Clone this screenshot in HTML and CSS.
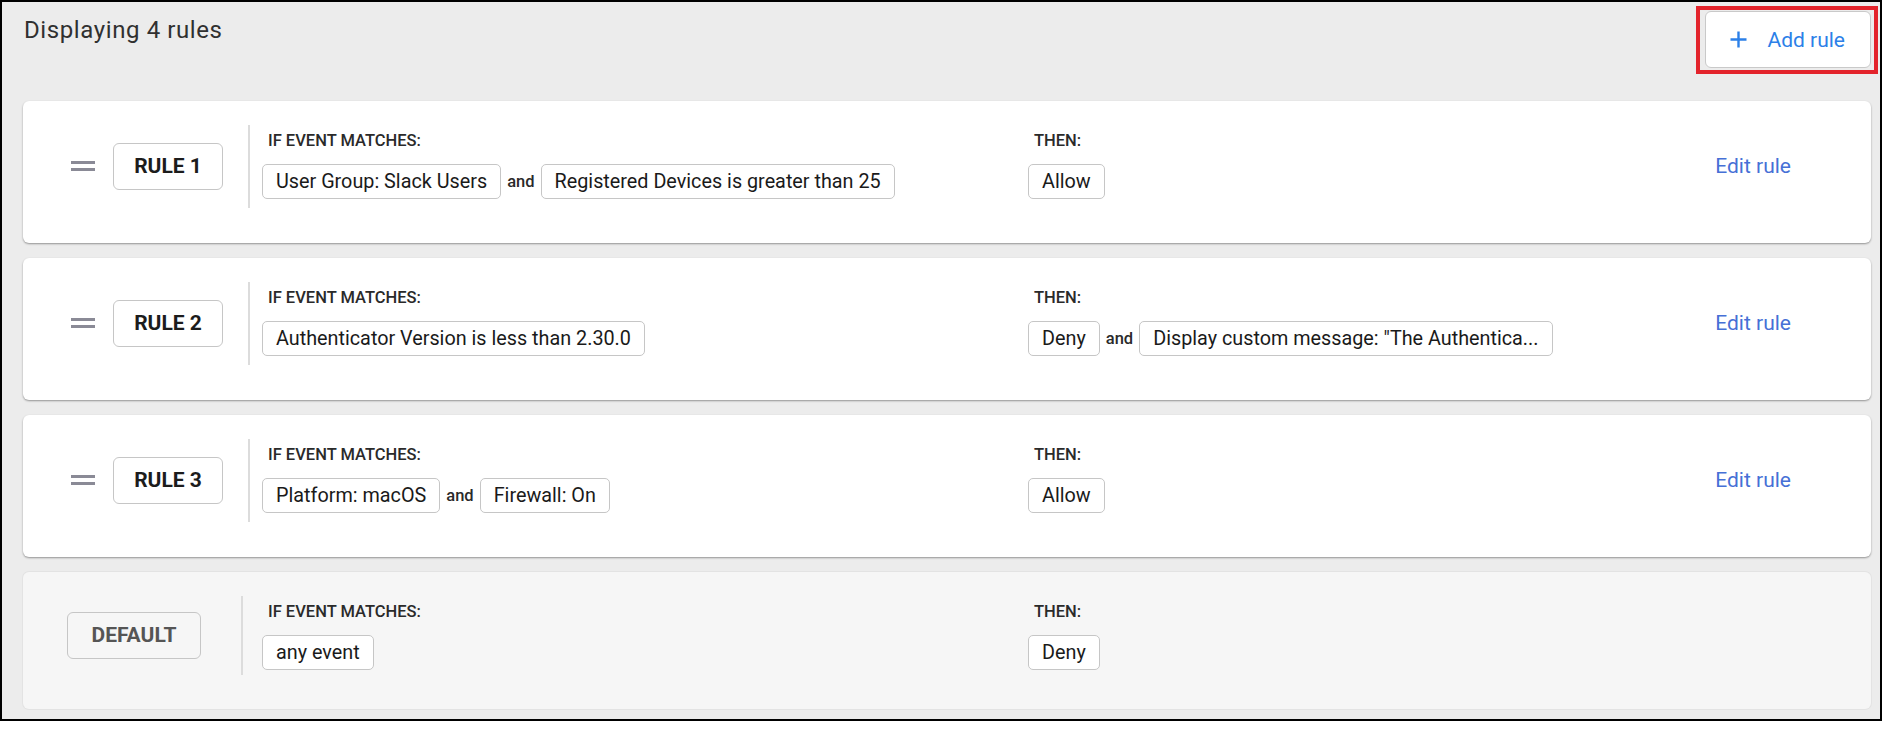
FILE: index.html
```html
<!DOCTYPE html>
<html lang="en">
<head>
<meta charset="utf-8">
<title>Rules</title>
<link rel="stylesheet" href="styles.css">
</head>
<body>
<div class="panel">
  <div class="header">
    <h2 class="title">Displaying 4 rules</h2>
    <span class="highlight">
      <button class="add-btn" type="button">
        <svg class="plus" width="19" height="19" viewBox="0 0 19 19" aria-hidden="true"><path d="M9.5 1.5v16M1.5 9.5h16" stroke="currentColor" stroke-width="2.4" fill="none"/></svg>
        <span>Add rule</span>
      </button>
    </span>
  </div>
  <div class="rules">
    <div class="card">
      <div class="lead">
        <span class="handle"></span>
        <span class="tag">RULE 1</span>
      </div>
      <div class="body">
        <div class="cond cond-if">
          <div class="label">IF EVENT MATCHES:</div>
          <div class="chips"><span class="chip">User Group: Slack Users</span><span class="and">and</span><span class="chip">Registered Devices is greater than 25</span></div>
        </div>
        <div class="cond cond-then">
          <div class="label">THEN:</div>
          <div class="chips"><span class="chip">Allow</span></div>
        </div>
      </div>
      <a class="edit" href="#">Edit rule</a>
    </div>
    <div class="card">
      <div class="lead">
        <span class="handle"></span>
        <span class="tag">RULE 2</span>
      </div>
      <div class="body">
        <div class="cond cond-if">
          <div class="label">IF EVENT MATCHES:</div>
          <div class="chips"><span class="chip">Authenticator Version is less than 2.30.0</span></div>
        </div>
        <div class="cond cond-then">
          <div class="label">THEN:</div>
          <div class="chips"><span class="chip">Deny</span><span class="and">and</span><span class="chip">Display custom message: "The Authentica...</span></div>
        </div>
      </div>
      <a class="edit" href="#">Edit rule</a>
    </div>
    <div class="card">
      <div class="lead">
        <span class="handle"></span>
        <span class="tag">RULE 3</span>
      </div>
      <div class="body">
        <div class="cond cond-if">
          <div class="label">IF EVENT MATCHES:</div>
          <div class="chips"><span class="chip">Platform: macOS</span><span class="and">and</span><span class="chip">Firewall: On</span></div>
        </div>
        <div class="cond cond-then">
          <div class="label">THEN:</div>
          <div class="chips"><span class="chip">Allow</span></div>
        </div>
      </div>
      <a class="edit" href="#">Edit rule</a>
    </div>
    <div class="card card-default">
      <div class="lead lead-default">
        <span class="tag tag-default">DEFAULT</span>
      </div>
      <div class="body body-default">
        <div class="cond cond-if">
          <div class="label">IF EVENT MATCHES:</div>
          <div class="chips"><span class="chip">any event</span></div>
        </div>
        <div class="cond cond-then">
          <div class="label">THEN:</div>
          <div class="chips"><span class="chip">Deny</span></div>
        </div>
      </div>
    </div>
  </div>
</div>
</body>
</html>
```

FILE: styles.css
```css
* { box-sizing: border-box; }

html, body {
  margin: 0;
  padding: 0;
  background: #ffffff;
}

body {
  font-family: Roboto, "Liberation Sans", Arial, sans-serif;
  color: #1c1c1c;
}

.panel {
  width: 1882px;
  height: 721px;
  border: 2px solid #000;
  background: #ececec;
  overflow: hidden;
}

.header {
  display: flex;
  justify-content: space-between;
  align-items: flex-start;
  padding: 4px 2px 0 22px;
  margin-bottom: 27px;
}

.title {
  margin: 10px 0 0 0;
  font-size: 24px;
  line-height: 28px;
  font-weight: 400;
  letter-spacing: 0.6px;
  color: #303030;
}

.highlight {
  display: block;
  border: 4px solid #e3232b;
  padding: 1px 3px 2px 5px;
}

.add-btn {
  display: flex;
  align-items: center;
  gap: 19px;
  height: 57px;
  padding: 0 25px 0 23px;
  background: #fff;
  border: 1px solid #c9c9c9;
  border-radius: 6px;
  color: #2c80e8;
  font-family: inherit;
  font-size: 21px;
  font-weight: 400;
  cursor: pointer;
}

.plus { display: block; }

.rules {
  display: flex;
  flex-direction: column;
  gap: 15px;
  padding: 0 9px 0 21px;
}

.card {
  display: flex;
  align-items: center;
  height: 142px;
  padding: 24px 80px 36px 48px;
  background: #fff;
  border-radius: 6px;
  box-shadow: 0 1px 2px rgba(0, 0, 0, 0.38);
}

.card-default {
  height: 137px;
  padding: 24px 0 35px 44px;
  background: #f6f6f6;
  box-shadow: 0 0 0 1px #e3e3e3;
}

.lead {
  display: flex;
  align-items: center;
  gap: 18px;
  margin-right: 25px;
}

.lead-default { margin-right: 40px; }

.handle {
  display: block;
  width: 24px;
  height: 10px;
  border-top: 3px solid #8a8a96;
  border-bottom: 3px solid #8a8a96;
}

.tag {
  display: block;
  width: 110px;
  padding: 10px 0;
  text-align: center;
  border: 1px solid #c6c6c6;
  border-radius: 6px;
  font-size: 21px;
  line-height: 25px;
  font-weight: 700;
  color: #1c1c1c;
}

.tag-default {
  width: 134px;
  color: #555;
}

.body {
  flex: 1;
  display: flex;
  border-left: 2px solid #dcdcdc;
  padding: 6px 0 9px 12px;
}

.body-default {
  padding: 6px 0 5px 19px;
}

.cond {
  display: flex;
  flex-direction: column;
  gap: 14px;
}

.cond-if { flex: 0 0 766px; }
.cond-then { flex: 1; }

.label {
  padding-left: 6px;
  font-size: 16.5px;
  line-height: 19px;
  font-weight: 500;
  color: #2a2a2a;
}

.chips {
  display: flex;
  align-items: center;
  gap: 6px;
}

.chip {
  display: block;
  padding: 5px 13px;
  border: 1px solid #c6c6c6;
  border-radius: 5px;
  background: #fff;
  font-size: 19.8px;
  line-height: 23px;
  white-space: nowrap;
  color: #1a1a1a;
}

.and {
  font-size: 16.5px;
  font-weight: 500;
  color: #2a2a2a;
}

.edit {
  font-size: 21px;
  line-height: 25px;
  color: #4670d6;
  text-decoration: none;
}
```
